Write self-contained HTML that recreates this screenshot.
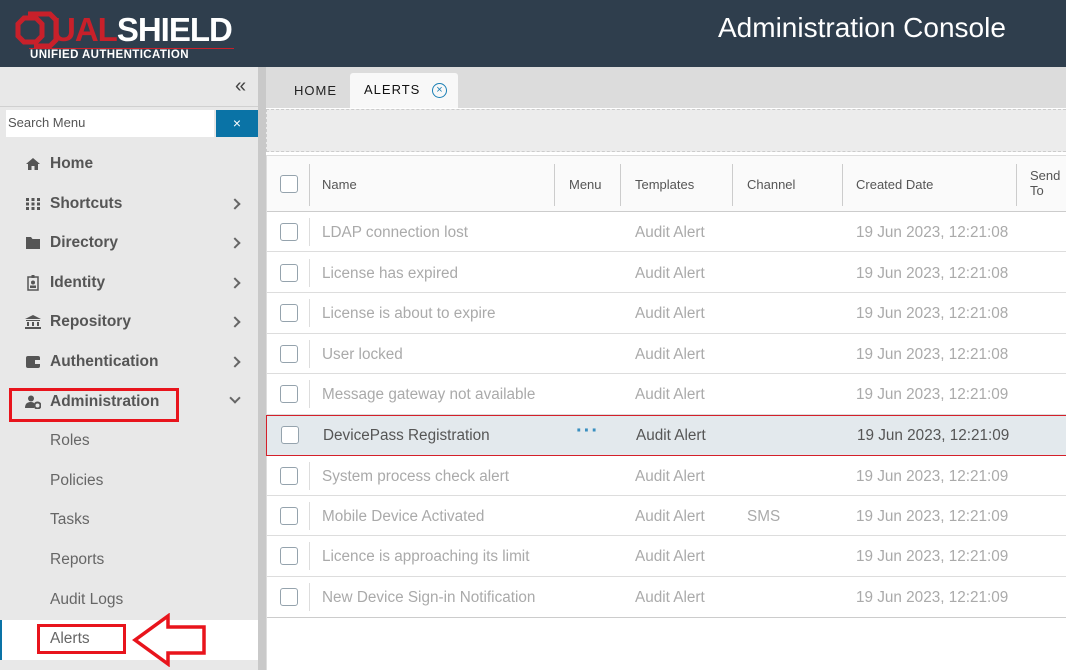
<!DOCTYPE html>
<html><head><meta charset="utf-8"><style>
*{box-sizing:border-box;margin:0;padding:0}
body{width:1066px;height:670px;overflow:hidden;font-family:"Liberation Sans",sans-serif;background:#fff;position:relative}
.a{position:absolute}
#hdr{left:0;top:0;width:1066px;height:67px;background:#2f3e4d}
#side{left:0;top:67px;width:258px;height:603px;background:#e8e8e8}
.mi{position:absolute;left:50px;font-size:15.5px;color:#555;font-weight:bold;line-height:18px}
.si{position:absolute;left:50px;font-size:15.5px;color:#666;line-height:18px}
.chev{position:absolute;left:231px;width:8px;height:8px;border-right:2px solid #666;border-top:2px solid #666;transform:rotate(45deg)}
.ic{position:absolute;left:25px;width:16px;height:14px}
.row{position:absolute;left:267px;width:799px;height:40px;border-bottom:1px solid #ddd}
.cb{position:absolute;left:13px;top:11px;width:18px;height:18px;border:1.5px solid #95a3ad;border-radius:3px;background:#fff}
.dv{position:absolute;left:42px;top:6px;width:1px;height:28px;background:#ddd}
.t{position:absolute;top:12px;font-size:15.3px;color:#aaa;white-space:nowrap}
.h{position:absolute;font-size:13px;color:#555;white-space:nowrap}
.hd{position:absolute;top:8px;width:1px;height:42px;background:#ccc}
</style></head><body>
<div id="hdr" class="a">
 <svg class="a" style="left:14px;top:10px" width="60" height="42" viewBox="0 0 60 42"><path d="M14 4 H36 L42 10 V30 L36 36 H20" fill="none" stroke="#c8202a" stroke-width="5"/><path d="M4 14 L10 8 H22 L28 14 V26 L22 32 H10 L4 26 Z" fill="none" stroke="#c8202a" stroke-width="5"/></svg>
 <div class="a" style="left:52px;top:12px;font-size:33px;font-weight:bold;letter-spacing:-1px;color:#c8202a;line-height:36px">UAL<span style="color:#fff">SHIELD</span></div>
 <div class="a" style="left:29px;top:48px;width:205px;height:1px;background:#c8202a"></div>
 <div class="a" style="left:30px;top:49px;font-size:11.5px;font-weight:bold;color:#fff;letter-spacing:0.4px;line-height:12px">UNIFIED AUTHENTICATION</div>
 <div class="a" style="left:718px;top:12px;font-size:28px;color:#fff;line-height:32px">Administration Console</div>
</div>
<div id="side" class="a"></div>
<div class="a" style="left:258px;top:67px;width:8px;height:603px;background:#c9c9c9"></div>
<div class="a" style="left:0;top:106px;width:258px;height:1px;background:#d0d0d0"></div>
<div class="a" style="left:235px;top:75px;font-size:20px;color:#444">«</div>
<div class="a" style="left:6px;top:110px;width:208px;height:27px;background:#fff;font-size:13px;color:#555;padding:5px 2px">Search Menu</div>
<div class="a" style="left:216px;top:110px;width:42px;height:27px;background:#0a73a6;color:#fff;text-align:center;font-size:14px;line-height:26px">×</div>

<svg class="ic" style="top:157px" viewBox="0 0 16 14"><path d="M8 1 L1 7 H3 V13 H6.5 V9 H9.5 V13 H13 V7 H15 Z" fill="#555"/></svg><div class="mi" style="top:155px">Home</div>
<svg class="ic" style="top:197px" viewBox="0 0 16 14"><g fill="#555"><rect x="1" y="1" width="3" height="3"/><rect x="6.5" y="1" width="3" height="3"/><rect x="12" y="1" width="3" height="3"/><rect x="1" y="5.5" width="3" height="3"/><rect x="6.5" y="5.5" width="3" height="3"/><rect x="12" y="5.5" width="3" height="3"/><rect x="1" y="10" width="3" height="3"/><rect x="6.5" y="10" width="3" height="3"/><rect x="12" y="10" width="3" height="3"/></g></svg><div class="mi" style="top:195px">Shortcuts</div><div class="chev" style="top:200px"></div>
<svg class="ic" style="top:236px" viewBox="0 0 16 14"><path d="M1 1 H6 L7.5 3 H15 V13 H1 Z" fill="#555"/></svg><div class="mi" style="top:234px">Directory</div><div class="chev" style="top:239px"></div>
<svg class="ic" style="top:275px;height:16px" viewBox="0 0 16 16"><rect x="3" y="2" width="10" height="13" fill="none" stroke="#555" stroke-width="1.5"/><circle cx="8" cy="7.5" r="2" fill="#555"/><rect x="5" y="10.5" width="6" height="2.5" fill="#555"/><rect x="6.5" y="0" width="3" height="3" fill="#555"/></svg><div class="mi" style="top:274px">Identity</div><div class="chev" style="top:279px"></div>
<svg class="ic" style="top:315px" viewBox="0 0 16 14"><path d="M8 0 L16 4 H0 Z M1 5 H15 V6 H1 Z M2 7 H4 V11 H2 Z M7 7 H9 V11 H7 Z M12 7 H14 V11 H12 Z M0 12 H16 V14 H0 Z" fill="#555"/></svg><div class="mi" style="top:313px">Repository</div><div class="chev" style="top:318px"></div>
<svg class="ic" style="top:355px" viewBox="0 0 16 14"><rect x="1" y="1" width="14" height="12" rx="2" fill="#555"/><rect x="10" y="5" width="5" height="4" fill="#e8e8e8"/></svg><div class="mi" style="top:353px">Authentication</div><div class="chev" style="top:358px"></div>
<svg class="ic" style="top:395px" viewBox="0 0 16 14"><circle cx="6" cy="3.5" r="3" fill="#555"/><path d="M0 13 C0 8 3 7 6 7 C8 7 9 8 9 8 V13 Z" fill="#555"/><circle cx="12.5" cy="10.5" r="3" fill="none" stroke="#555" stroke-width="2"/></svg><div class="mi" style="top:393px">Administration</div>
<div class="a" style="left:231px;top:394px;width:8px;height:8px;border-right:2px solid #666;border-bottom:2px solid #666;transform:rotate(45deg)"></div>
<div class="a" style="left:9px;top:388px;width:170px;height:34px;border:3px solid #e8141c"></div>
<div class="si" style="top:432px">Roles</div>
<div class="si" style="top:472px">Policies</div>
<div class="si" style="top:511px">Tasks</div>
<div class="si" style="top:551px">Reports</div>
<div class="si" style="top:591px">Audit Logs</div>
<div class="a" style="left:0;top:620px;width:258px;height:40px;background:#fff"></div>
<div class="a" style="left:0;top:620px;width:2px;height:40px;background:#0a73a6"></div>
<div class="si" style="top:630px">Alerts</div>
<div class="a" style="left:37px;top:624px;width:89px;height:30px;border:3px solid #e8141c"></div>
<svg class="a" style="left:132px;top:613px" width="76" height="54" viewBox="0 0 76 54"><path d="M3 27 L36 3 V14 H72 V40 H36 V51 Z" fill="#fff" stroke="#e8141c" stroke-width="3.5"/></svg>

<div class="a" style="left:266px;top:67px;width:800px;height:41px;background:#dcdcdc"></div>
<div class="a" style="left:294px;top:83px;font-size:13px;letter-spacing:1px;color:#222">HOME</div>
<div class="a" style="left:350px;top:73px;width:108px;height:35px;background:#f8f8f8;border-radius:3px 3px 0 0"></div>
<div class="a" style="left:364px;top:82px;font-size:13px;letter-spacing:1px;color:#111">ALERTS</div>
<div class="a" style="left:432px;top:83px;width:15px;height:15px;border:1.5px solid #1a7fb5;border-radius:50%;color:#1a7fb5;font-size:11px;text-align:center;line-height:12px">×</div>
<div class="a" style="left:266px;top:109px;width:800px;height:43px;background:#ececec;border:1px dashed #ccc;border-right:none"></div>
<div class="a" style="left:266px;top:155px;width:800px;height:515px;background:#fff;border-left:1px solid #ddd;border-top:1px solid #ddd"></div>
<div class="a" style="left:267px;top:156px;width:799px;height:56px;background:#fafafa;border-bottom:1px solid #ccc">
 <div class="cb" style="top:19px"></div>
 <div class="hd" style="left:42px"></div><div class="h" style="left:55px;top:21px">Name</div>
 <div class="hd" style="left:287px"></div><div class="h" style="left:302px;top:21px">Menu</div>
 <div class="hd" style="left:353px"></div><div class="h" style="left:368px;top:21px">Templates</div>
 <div class="hd" style="left:465px"></div><div class="h" style="left:480px;top:21px">Channel</div>
 <div class="hd" style="left:575px"></div><div class="h" style="left:589px;top:21px">Created Date</div>
 <div class="hd" style="left:749px"></div><div class="h" style="left:763px;top:12px;line-height:15px">Send<br>To</div>
</div>

<div class="row" style="top:212px"><div class="cb"></div><div class="dv"></div><div class="t" style="left:55px">LDAP connection lost</div><div class="t" style="left:368px">Audit Alert</div><div class="t" style="left:589px">19 Jun 2023, 12:21:08</div></div>
<div class="row" style="top:253px"><div class="cb"></div><div class="dv"></div><div class="t" style="left:55px">License has expired</div><div class="t" style="left:368px">Audit Alert</div><div class="t" style="left:589px">19 Jun 2023, 12:21:08</div></div>
<div class="row" style="top:293px;height:41px"><div class="cb"></div><div class="dv"></div><div class="t" style="left:55px">License is about to expire</div><div class="t" style="left:368px">Audit Alert</div><div class="t" style="left:589px">19 Jun 2023, 12:21:08</div></div>
<div class="row" style="top:334px"><div class="cb"></div><div class="dv"></div><div class="t" style="left:55px">User locked</div><div class="t" style="left:368px">Audit Alert</div><div class="t" style="left:589px">19 Jun 2023, 12:21:08</div></div>
<div class="row" style="top:374px;height:41px"><div class="cb"></div><div class="dv"></div><div class="t" style="left:55px">Message gateway not available</div><div class="t" style="left:368px">Audit Alert</div><div class="t" style="left:589px">19 Jun 2023, 12:21:09</div></div>
<div class="row" style="top:415px;height:41px;left:266px;width:800px;background:#e3e9ed;border:1px solid #d4202a;border-right:none"><div class="cb" style="left:14px;top:10px"></div><div class="t" style="left:56px;top:11px;color:#555">DevicePass Registration</div><div class="t" style="left:309px;top:4px;color:#3a8fc0;font-size:20px;letter-spacing:1px;font-weight:bold">···</div><div class="t" style="left:369px;top:11px;color:#555">Audit Alert</div><div class="t" style="left:590px;top:11px;color:#555">19 Jun 2023, 12:21:09</div></div>
<div class="row" style="top:456px"><div class="cb"></div><div class="dv"></div><div class="t" style="left:55px">System process check alert</div><div class="t" style="left:368px">Audit Alert</div><div class="t" style="left:589px">19 Jun 2023, 12:21:09</div></div>
<div class="row" style="top:496px"><div class="cb"></div><div class="dv"></div><div class="t" style="left:55px">Mobile Device Activated</div><div class="t" style="left:368px">Audit Alert</div><div class="t" style="left:480px">SMS</div><div class="t" style="left:589px">19 Jun 2023, 12:21:09</div></div>
<div class="row" style="top:536px;height:41px"><div class="cb"></div><div class="dv"></div><div class="t" style="left:55px">Licence is approaching its limit</div><div class="t" style="left:368px">Audit Alert</div><div class="t" style="left:589px">19 Jun 2023, 12:21:09</div></div>
<div class="row" style="top:577px;height:41px;border-bottom:1px solid #ccc"><div class="cb"></div><div class="dv"></div><div class="t" style="left:55px">New Device Sign-in Notification</div><div class="t" style="left:368px">Audit Alert</div><div class="t" style="left:589px">19 Jun 2023, 12:21:09</div></div>
</body></html>
